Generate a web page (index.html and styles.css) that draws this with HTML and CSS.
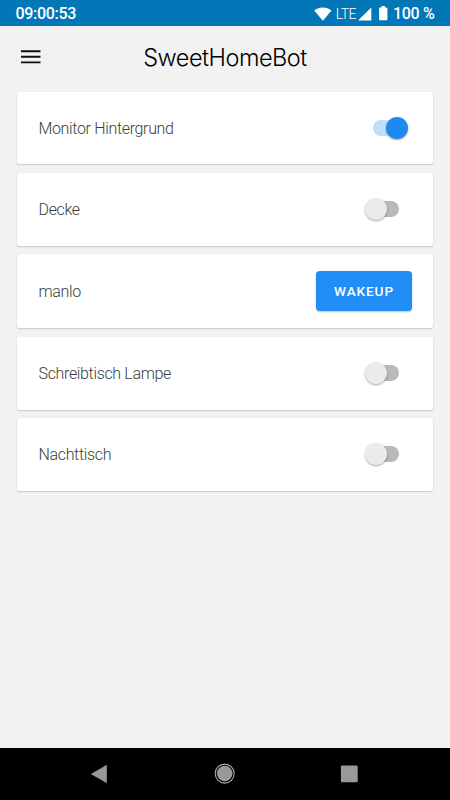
FILE: index.html
```
<!DOCTYPE html>
<html lang="de">
<head>
<meta charset="utf-8">
<title>SweetHomeBot</title>
<link rel="stylesheet" href="styles.css">
</head>
<body>
<div class="statusbar">
  <span class="clock">09:00:53</span>
  <div class="status">
    <svg class="wifi" width="18" height="14" viewBox="0 0 18 14"><path d="M.2 3.4C5.2-.6 12.600-.6 17.500 3.400L8.900 13.800Z" fill="#fff"/></svg>
    <span class="lte">LTE</span>
    <svg class="signal" width="14" height="14" viewBox="0 0 14 14"><path d="M0 13.500 13.300.500V13.500Z" fill="#fff"/></svg>
    <svg class="battery" width="9" height="15" viewBox="0 0 9 15"><path d="M2.500 0h3.500v1.500H7.600Q8.400 1.500 8.400 2.300V13.500Q8.400 14.300 7.600 14.300H.9Q.1 14.300.1 13.500V2.300Q.1 1.500.9 1.500H2.500Z" fill="#fff"/></svg>
    <span class="percent">100 %</span>
  </div>
</div>
<header class="appbar">
  <svg class="menu" width="20" height="14" viewBox="0 0 20 14"><path d="M0 1.200H19.500M0 6.800H19.500M0 12.400H19.500" stroke="#111" stroke-width="1.900"/></svg>
  <h1 class="title">SweetHomeBot</h1>
</header>
<main class="list">
  <section class="card"><span class="label">Monitor Hintergrund</span><span class="switch on"><span class="thumb"></span></span></section>
  <section class="card"><span class="label">Decke</span><span class="switch"><span class="thumb"></span></span></section>
  <section class="card tall"><span class="label">manlo</span><button class="wakeup">WAKEUP</button></section>
  <section class="card"><span class="label">Schreibtisch Lampe</span><span class="switch"><span class="thumb"></span></span></section>
  <section class="card"><span class="label">Nachttisch</span><span class="switch"><span class="thumb"></span></span></section>
</main>
<nav class="navbar">
  <svg width="18" height="20" viewBox="0 0 18 20"><path d="M1.500 10 16.400 1.500V18.500Z" fill="#999" stroke="#999" stroke-width=".8" stroke-linejoin="round"/></svg>
  <svg width="22" height="22" viewBox="0 0 22 22"><circle cx="11.700" cy="10.600" r="9.500" fill="none" stroke="#aaa" stroke-width="1.100"/><circle cx="11.700" cy="10.600" r="7.800" fill="#999"/></svg>
  <svg width="18" height="18" viewBox="0 0 18 18"><rect x=".9" y=".4" width="16.800" height="16.800" rx="1.200" fill="#999"/></svg>
</nav>
</body>
</html>
```
FILE: styles.css
```
* { box-sizing: border-box; }
body {
  margin: 0;
  height: 800px;
  display: flex;
  flex-direction: column;
  overflow: hidden;
  background: #f2f2f2;
  font-family: Roboto, sans-serif;
}
svg { display: block; flex: none; }
.statusbar {
  height: 26px;
  flex: none;
  padding: 1px 15.500px 0 15.500px;
  display: flex;
  align-items: center;
  justify-content: space-between;
  background: #0277b7;
  color: #fff;
  font-size: 16px;
  font-weight: 500;
  letter-spacing: -0.3px;
  white-space: nowrap;
}
.status { display: flex; align-items: center; }
.lte { font-size: 14px; font-weight: 300; margin: 0 2px 0 4px; letter-spacing: -0.5px; }
.battery { margin: -1px 5px 0 7px; }
.appbar {
  height: 65.700px;
  flex: none;
  padding: 0 21px 3px 21px;
  display: grid;
  grid-template-columns: 20px 1fr 20px;
  align-items: center;
}
.title {
  margin: 0;
  padding-top: 1px;
  text-align: center;
  font-family: Inter, sans-serif;
  font-size: 23.500px;
  font-weight: 300;
  letter-spacing: -0.5px;
  color: #000;
  white-space: nowrap;
}
.list {
  flex: 1;
  padding: 0 16.600px;
  display: flex;
  flex-direction: column;
  gap: 8.600px;
}
.card {
  height: 72.700px;
  flex: none;
  padding: 0 21.900px;
  display: flex;
  align-items: center;
  justify-content: space-between;
  background: #fff;
  border-radius: 2px;
  box-shadow: 0 1px 1.500px rgba(0, 0, 0, .17), 0 0 1px rgba(0, 0, 0, .12);
}
.card.tall { height: 74px; }
.label { font-size: 16px; font-weight: 300; letter-spacing: -0.34px; color: #3c3c3c; padding-top: 1px; }
.switch {
  position: relative;
  width: 26px;
  height: 16px;
  margin-right: 12.500px;
  border-radius: 8px;
  background: #b9b9b9;
}
.thumb {
  position: absolute;
  top: -3px;
  left: -8.500px;
  width: 22px;
  height: 22px;
  border-radius: 50%;
  background: #ebebeb;
  box-shadow: 0 1px 2px rgba(0, 0, 0, .35);
}
.switch.on { background: #bfdffb; }
.switch.on .thumb { left: 12.500px; background: #1e8af0; }
.wakeup {
  width: 96px;
  height: 40px;
  padding: 0 0 0 1px;
  border: 0;
  border-radius: 4px;
  background: #208ef4;
  box-shadow: 0 1px 2px rgba(0, 0, 0, .25);
  color: #fff;
  font-family: inherit;
  font-size: 13.600px;
  font-weight: 500;
  letter-spacing: .9px;
}
.navbar {
  height: 52px;
  flex: none;
  padding: 0 92px 0 90px;
  display: flex;
  align-items: center;
  justify-content: space-between;
  background: #000;
}
```
